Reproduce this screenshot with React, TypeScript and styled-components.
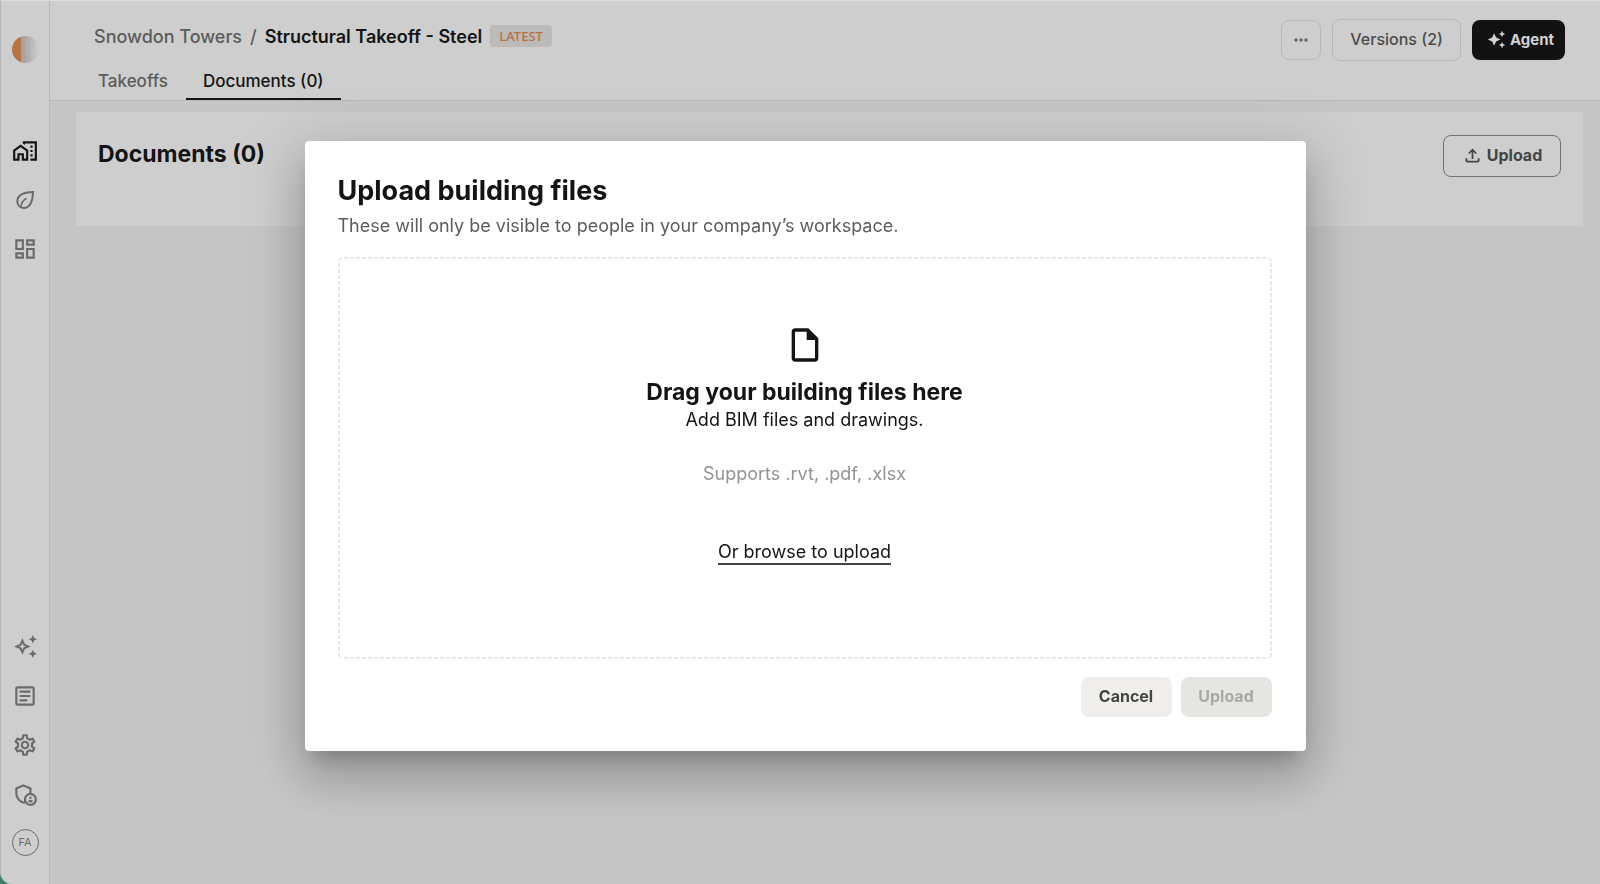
import React from "react";
import styled, { createGlobalStyle } from "styled-components";
import {
  MdOutlineArticle,
  MdOutlineAutoAwesome,
  MdAutoAwesome,
  MdOutlineAdminPanelSettings,
  MdOutlineDashboard,
  MdOutlineHomeWork,
  MdOutlineSettings,
  MdOutlineFileUpload,
  MdMoreHoriz,
} from "react-icons/md";

const GlobalStyle = createGlobalStyle`
  *, *::before, *::after { box-sizing: border-box; }
  body {
    margin: 0;
    background: #3f7d6d;
    color: #141414;
    font-family: Inter, "Liberation Sans", sans-serif;
    font-size: 18px;
  }
  h1, h2, h3, p { margin: 0; }
  button { font: inherit; color: inherit; cursor: pointer; }
`;

const Shell = styled.div`
  display: flex;
  min-height: 100vh;
  background: #c6c6c6;
  border-top: 1px solid #dcddd7;
  border-left: 1px solid #b8b8b8;
  border-bottom-left-radius: 12px;
  overflow: hidden;
`;

const Sidebar = styled.nav`
  display: flex;
  flex-direction: column;
  align-items: center;
  flex: none;
  width: 49px;
  padding: 35px 0 28px;
  background: #cecece;
  border-right: 1px solid #bababa;
`;

const LogoLink = styled.a`
  display: flex;
  width: 27px;
  height: 27px;
  margin-bottom: 74px;
`;

const NavGroup = styled.div`
  display: flex;
  flex-direction: column;
  gap: 22px;
`;

const Spacer = styled.div`
  flex: 1;
`;

const NavItem = styled.a<{ $active?: boolean }>`
  display: flex;
  align-items: center;
  justify-content: center;
  width: 27px;
  height: 27px;
  color: ${(p) => (p.$active ? "#141414" : "#6b6b69")};
`;

const Avatar = styled.button`
  width: 27px;
  height: 27px;
  padding: 0;
  border: 1px solid #6b6b69;
  border-radius: 50%;
  background: none;
  color: #6b6b69;
  font-size: 11px;
  line-height: 25px;
`;

const Page = styled.div`
  flex: 1;
  min-width: 0;
`;

const Header = styled.header`
  display: flex;
  justify-content: space-between;
  height: 100px;
  padding: 18px 35px 0 44px;
  background: #cecece;
  border-bottom: 1px solid #b8b8b8;
`;

const HeaderLeft = styled.div`
  display: flex;
  flex-direction: column;
  justify-content: space-between;
`;

const Crumbs = styled.div`
  display: flex;
  align-items: center;
  gap: 8px;
  height: 34px;
  font-weight: 500;
  color: #5c5c5a;
`;

const CrumbLink = styled.a`
  color: inherit;
  text-decoration: none;
`;

const CrumbTitle = styled.h1`
  font-size: 18px;
  font-weight: 600;
  color: #141414;
`;

const Badge = styled.span`
  padding: 0 9px;
  border-radius: 4px;
  background: #bdbbb9;
  color: #b86f42;
  font-family: "Noto Sans", sans-serif;
  font-size: 13px;
  font-weight: 500;
  line-height: 22px;
`;

const Tabs = styled.div`
  display: flex;
`;

const Tab = styled.a<{ $active?: boolean }>`
  height: 39px;
  padding: 0 17px;
  border-bottom: 2px solid ${(p) => (p.$active ? "#141414" : "transparent")};
  color: ${(p) => (p.$active ? "#141414" : "#5c5c5a")};
  font-size: 17px;
  font-weight: 500;
  line-height: 40px;
  text-decoration: none;

  &:first-child {
    padding: 0 18px 0 4px;
  }
`;

const HeaderActions = styled.div`
  display: flex;
  align-items: center;
  gap: 11px;
  height: 42px;
`;

const Button = styled.button<{ $kind: "outline" | "strong" | "dark" | "soft" | "off" }>`
  display: flex;
  align-items: center;
  justify-content: center;
  gap: 4px;
  height: ${(p) => (p.$kind === "outline" || p.$kind === "strong" ? 42 : 40)}px;
  padding: 0 17px 2px;
  border: ${(p) =>
    p.$kind === "outline" ? "1px solid #b8b8b8" : p.$kind === "strong" ? "1px solid #727272" : "0"};
  border-radius: 8px;
  background: ${(p) =>
    ({ outline: "none", strong: "none", dark: "#121212", soft: "#efeeec", off: "#e5e6e1" })[p.$kind]};
  color: ${(p) =>
    ({ outline: "#4b4b4b", strong: "#444444", dark: "#d2d2d2", soft: "#454543", off: "#a8a8a6" })[p.$kind]};
  font-size: 16px;
  font-weight: ${(p) => (p.$kind === "outline" ? 500 : 700)};
`;

const IconButton = styled(Button)`
  width: 40px;
  height: 40px;
  padding: 0;
  color: #636363;
`;

const VersionsButton = styled(Button)`
  min-width: 128px;
`;

const AgentButton = styled(Button)`
  min-width: 93px;
  padding: 0 11px 1px 15px;
  font-size: 15px;
`;

const UploadButton = styled(Button)`
  min-width: 118px;
`;

const DialogButton = styled(Button)`
  min-width: 91px;
  padding-bottom: 3px;
`;

const DocumentsCard = styled.section`
  display: flex;
  align-items: flex-start;
  justify-content: space-between;
  min-height: 114px;
  margin: 11px 17px 0 26px;
  padding: 23px 22px 23px;
  background: #cecece;
`;

const CardTitle = styled.h2`
  font-size: 23px;
  font-weight: 700;
  line-height: 38px;
`;

const Overlay = styled.div`
  position: fixed;
  inset: 0;
  display: flex;
  align-items: center;
  justify-content: center;
  padding: 8px 0 0 10px;
`;

const Dialog = styled.section`
  width: 1001px;
  max-width: 94%;
  padding: 34px 34px 34px 33px;
  border-radius: 4px;
  background: #ffffff;
  box-shadow:
    0 14px 19px -9px rgba(0, 0, 0, 0.22),
    0 28px 46px 4px rgba(0, 0, 0, 0.14),
    0 11px 56px 12px rgba(0, 0, 0, 0.13);
`;

const DialogTitle = styled.h2`
  font-size: 27px;
  font-weight: 700;
  line-height: 32px;
`;

const DialogText = styled.p`
  margin-top: 6px;
  color: #5c5c5a;
  line-height: 26px;
`;

const DropZone = styled.div`
  display: flex;
  flex-direction: column;
  align-items: center;
  margin-top: 18px;
  padding: 68px 22px 94px;
  border-radius: 5px;
  background:
    repeating-linear-gradient(90deg, #e6e6e4 0 4px, transparent 4px 6px) top / 100% 2px no-repeat,
    repeating-linear-gradient(90deg, #e6e6e4 0 4px, transparent 4px 6px) bottom / 100% 2px no-repeat,
    repeating-linear-gradient(#e6e6e4 0 4px, transparent 4px 6px) left / 2px 100% no-repeat,
    repeating-linear-gradient(#e6e6e4 0 4px, transparent 4px 6px) right / 2px 100% no-repeat;
  text-align: center;
`;

const DropTitle = styled.h3`
  margin-top: 12px;
  font-size: 23px;
  font-weight: 700;
  line-height: 30px;
`;

const DropText = styled.p`
  line-height: 26px;
`;

const DropHint = styled.p`
  margin-top: 28px;
  color: #929290;
  line-height: 26px;
`;

const BrowseButton = styled.button`
  margin-top: 54px;
  padding: 0;
  border: 0;
  border-bottom: 2px solid #444444;
  background: none;
  color: #141414;
  line-height: 22px;
`;

const DialogActions = styled.div`
  display: flex;
  justify-content: flex-end;
  gap: 9px;
  margin-top: 18px;
`;

const Logo = () => (
  <svg width="27" height="27" viewBox="0 0 27 27" aria-hidden="true">
    <defs>
      <linearGradient id="fade" x1="0" x2="1">
        <stop offset="0" stopColor="#a9a9ac" />
        <stop offset="1" stopColor="#cecece" />
      </linearGradient>
    </defs>
    <path d="M13.500 0a13.500 13.500 0 0 1 0 27z" fill="url(#fade)" />
    <path d="M13.500 0a13.500 13.500 0 0 0 0 27z" fill="#a9a19c" />
    <path d="M9 .8a13.500 13.500 0 0 0 0 25.400z" fill="#b87343" />
  </svg>
);

const LeafIcon = () => (
  <svg width="26" height="26" viewBox="0 0 24 24" fill="none" stroke="currentColor" strokeWidth="1.900" aria-hidden="true">
    <path d="M19.400 4.600C12.500 4.800 4.900 6.200 4.900 13.400c0 3.400 2.500 5.900 5.900 5.900 6.200 0 8.300-6.500 8.600-14.700z" />
    <path d="M8 18.600c.4-3.300 2-6 5.400-8.300" strokeWidth="1.500" />
  </svg>
);

const FileIcon = () => (
  <svg width="40" height="40" viewBox="0 0 24 24" fill="currentColor" aria-hidden="true">
    <path d="M6 22q-.825 0-1.412-.587T4 20V4q0-.825.588-1.412T6 2h8l6 6v12q0 .825-.587 1.413T18 22zm7-13V4H6v16h12V9z" />
  </svg>
);

export default function App() {
  return (
    <>
      <GlobalStyle />
      <Shell>
        <Sidebar aria-label="Main">
          <LogoLink href="#" aria-label="Home"><Logo /></LogoLink>
          <NavGroup>
            <NavItem href="#" aria-label="Projects" $active><MdOutlineHomeWork size={26} /></NavItem>
            <NavItem href="#" aria-label="Sustainability"><LeafIcon /></NavItem>
            <NavItem href="#" aria-label="Dashboard"><MdOutlineDashboard size={26} /></NavItem>
          </NavGroup>
          <Spacer />
          <NavGroup>
            <NavItem href="#" aria-label="Assistant"><MdOutlineAutoAwesome size={25} /></NavItem>
            <NavItem href="#" aria-label="Articles"><MdOutlineArticle size={26} /></NavItem>
            <NavItem href="#" aria-label="Settings"><MdOutlineSettings size={26} /></NavItem>
            <NavItem href="#" aria-label="Administration"><MdOutlineAdminPanelSettings size={26} /></NavItem>
            <Avatar>FA</Avatar>
          </NavGroup>
        </Sidebar>
        <Page>
          <Header>
            <HeaderLeft>
              <Crumbs>
                <CrumbLink href="#">Snowdon Towers</CrumbLink>
                <span>/</span>
                <CrumbTitle>Structural Takeoff - Steel</CrumbTitle>
                <Badge>LATEST</Badge>
              </Crumbs>
              <Tabs>
                <Tab href="#">Takeoffs</Tab>
                <Tab href="#" $active aria-current="page">Documents (0)</Tab>
              </Tabs>
            </HeaderLeft>
            <HeaderActions>
              <IconButton $kind="outline" aria-label="More"><MdMoreHoriz size={20} /></IconButton>
              <VersionsButton $kind="outline">Versions (2)</VersionsButton>
              <AgentButton $kind="dark"><MdAutoAwesome size={19} />Agent</AgentButton>
            </HeaderActions>
          </Header>
          <main>
            <DocumentsCard>
              <CardTitle>Documents (0)</CardTitle>
              <UploadButton $kind="strong"><MdOutlineFileUpload size={21} />Upload</UploadButton>
            </DocumentsCard>
          </main>
        </Page>
      </Shell>
      <Overlay>
        <Dialog role="dialog" aria-modal="true" aria-labelledby="upload-title">
          <DialogTitle id="upload-title">Upload building files</DialogTitle>
          <DialogText>These will only be visible to people in your company’s workspace.</DialogText>
          <DropZone>
            <FileIcon />
            <DropTitle>Drag your building files here</DropTitle>
            <DropText>Add BIM files and drawings.</DropText>
            <DropHint>Supports .rvt, .pdf, .xlsx</DropHint>
            <BrowseButton>Or browse to upload</BrowseButton>
          </DropZone>
          <DialogActions>
            <DialogButton $kind="soft">Cancel</DialogButton>
            <DialogButton $kind="off" disabled>Upload</DialogButton>
          </DialogActions>
        </Dialog>
      </Overlay>
    </>
  );
}
